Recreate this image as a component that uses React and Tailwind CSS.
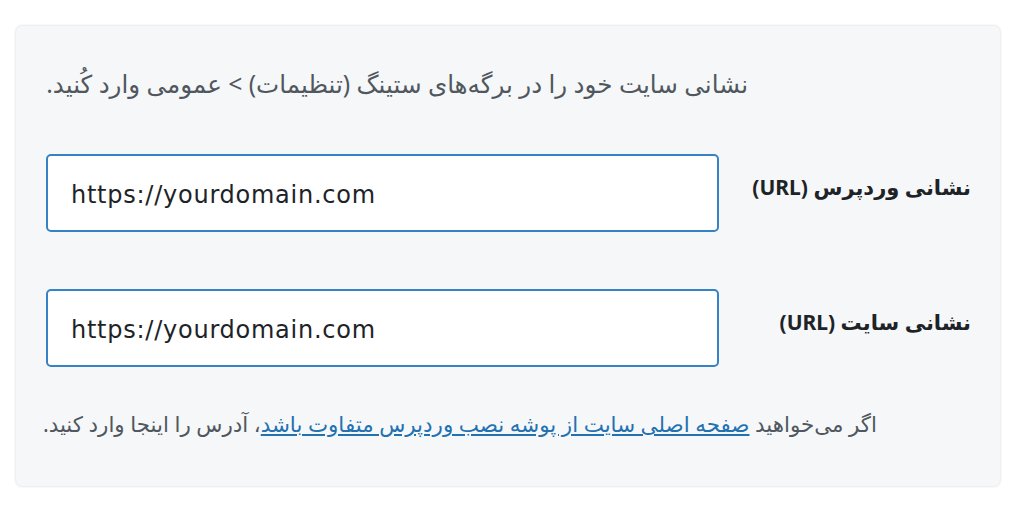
export default function App() {
  return (
    <div className="min-h-screen bg-white pt-[26px] pl-[16px] pr-[23px]" style={{ fontFamily: '"Noto Sans", "DejaVu Sans", sans-serif' }}>
      <div dir="rtl" className="h-[460px] rounded-[6px] bg-[#f6f7f9] shadow-[0_0_3px_rgba(0,0,0,0.18)] pr-[29px] pl-[30px] pt-[42px]">
        {/* Description */}
        <p className="mr-[223px] whitespace-nowrap text-[24.6px] leading-[32px] text-[#50575e]">
          نشانی سایت خود را در برگه‌های ستینگ (تنظیمات) &gt; عمومی وارد کُنید.
        </p>

        {/* Fields */}
        <div className="mt-[54px] grid grid-cols-[252px_1fr] gap-y-[57px] items-center">
          <label className="pb-[10px] text-[21px] font-bold text-[#1d2327]">نشانی وردپرس (URL)</label>
          <div
            dir="ltr"
            className="h-[78px] flex items-center rounded-[5px] border-2 border-[#3582c4] bg-white px-[23px] pt-[4px] text-[24px] tracking-[0.75px] text-[#1d2327]"
            style={{ fontFamily: '"DejaVu Sans", sans-serif' }}
          >
            https://yourdomain.com
          </div>

          <label className="pb-[10px] text-[21px] font-bold text-[#1d2327]">نشانی سایت (URL)</label>
          <div
            dir="ltr"
            className="h-[78px] flex items-center rounded-[5px] border-2 border-[#3582c4] bg-white px-[23px] pt-[4px] text-[24px] tracking-[0.75px] text-[#1d2327]"
            style={{ fontFamily: '"DejaVu Sans", sans-serif' }}
          >
            https://yourdomain.com
          </div>
        </div>

        {/* Hint */}
        <p className="mt-[42px] mr-[94px] whitespace-nowrap text-[21.4px] leading-[30px] text-[#50575e]">
          اگر می‌خواهید{' '}
          <a href="#" className="text-[#2271b1] underline">
            صفحه اصلی سایت از پوشه نصب وردپرس متفاوت باشد
          </a>
          ، آدرس را اینجا وارد کنید.
        </p>
      </div>
    </div>
  )
}
